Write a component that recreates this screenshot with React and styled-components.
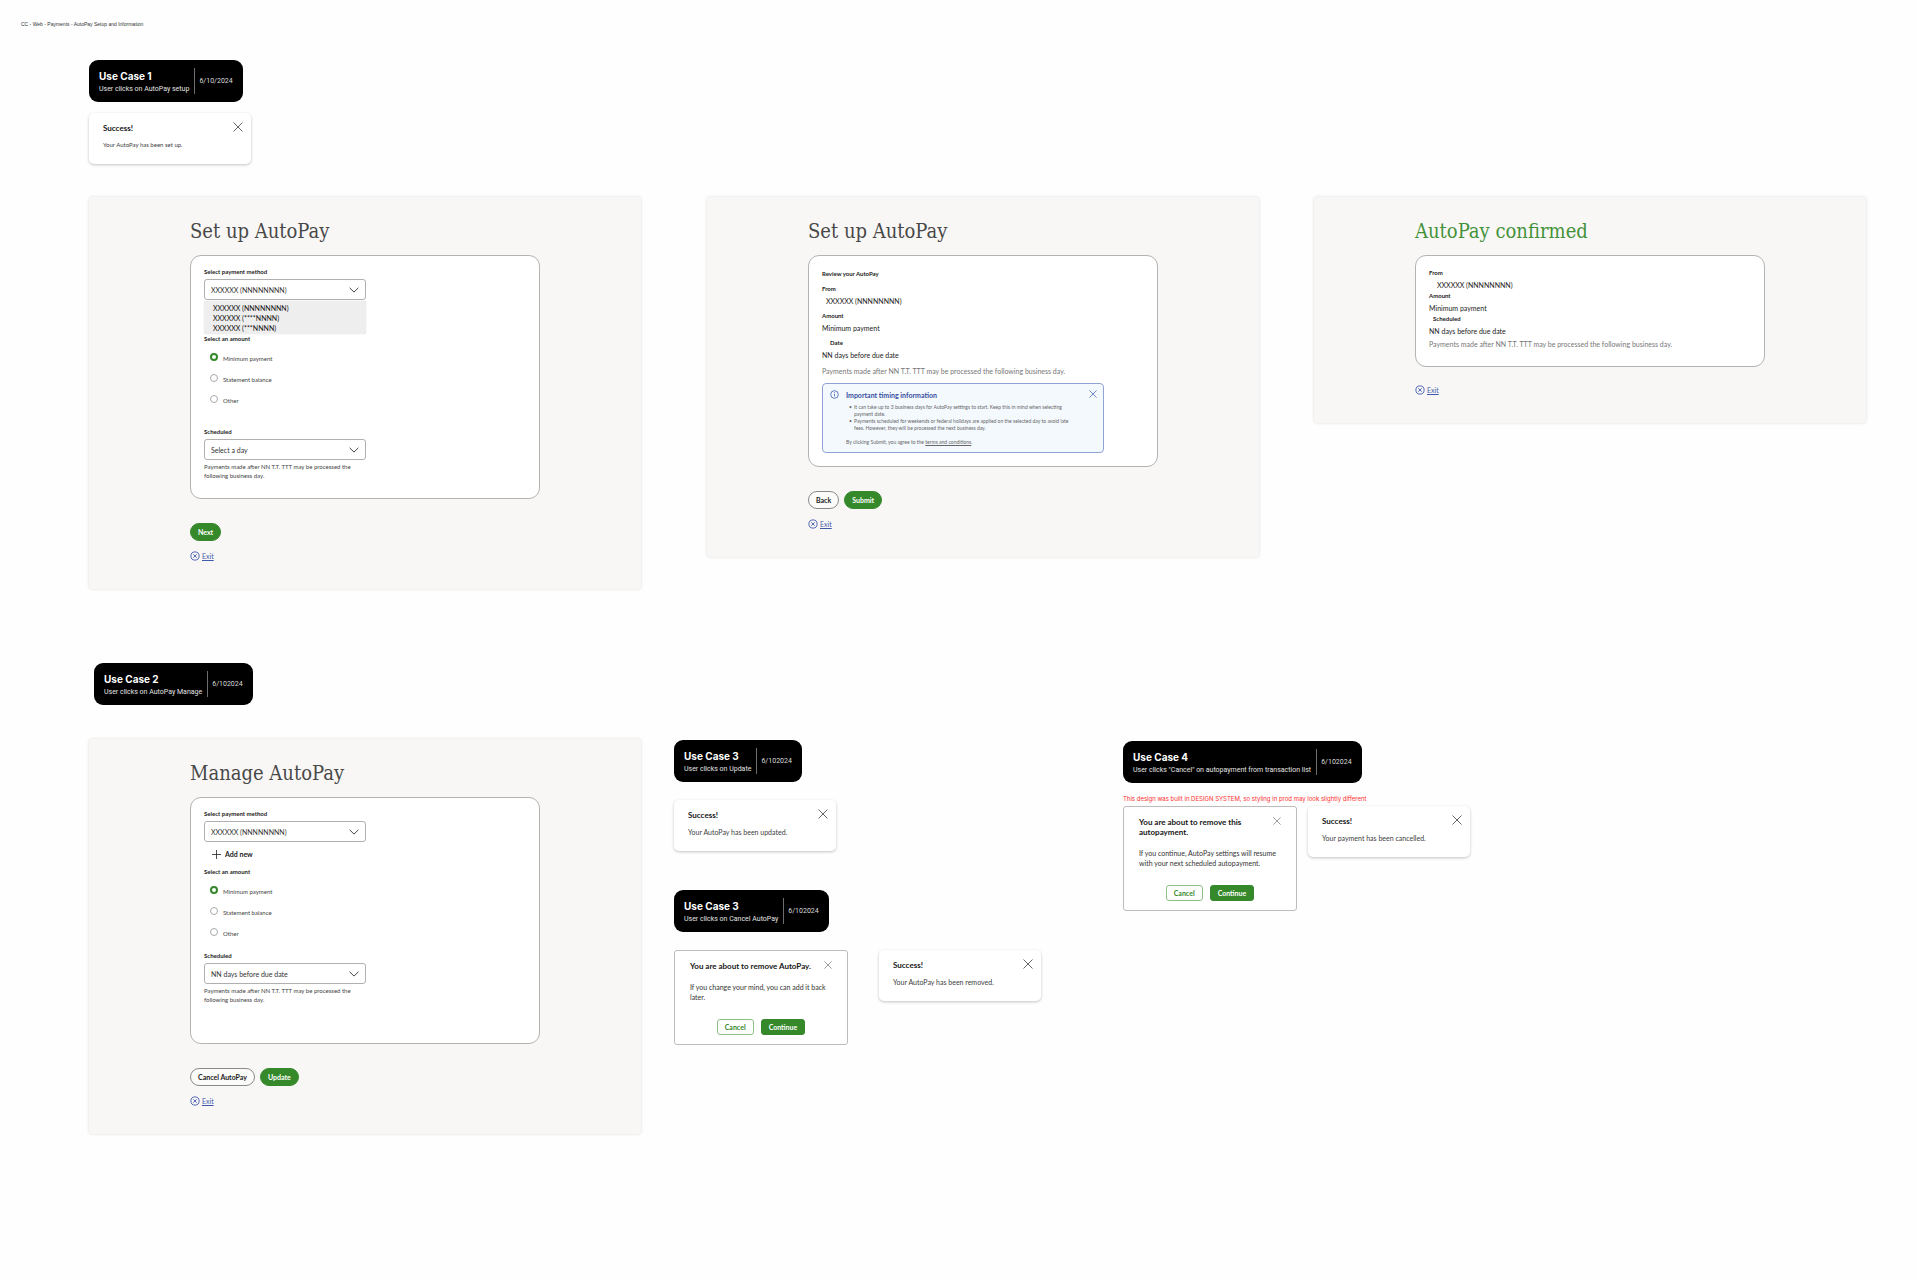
import React, { useId, useState } from "react";
import styled, { createGlobalStyle, css } from "styled-components";

const ink = "#333";
const green = "#35892a";
const blue = "#3f5aab";
const sans = `Lato, "Noto Sans", sans-serif`;
const ui = `Roboto, Inter, sans-serif`;

const GlobalStyle = createGlobalStyle`
  *, *::before, *::after { box-sizing: border-box; }
  body { margin: 0; background: #fefefe; }
  h1, h2, h3, p, ul, dl, dd, dt, fieldset { margin: 0; padding: 0; border: 0; }
  button, input, select { font: inherit; margin: 0; }
`;

const Board = styled.main`
  min-height: 100vh;
  padding: 20px 51px 40px 89px;
  color: ${ink};
  font-family: ${sans};
  font-size: 7px;
  line-height: 10px;
`;

const BoardTitle = styled.p`
  margin: 0 0 32px -68px;
  font-family: "Liberation Sans", sans-serif;
  font-size: 5px;
  line-height: 8px;
`;

const Badge = styled.header`
  display: flex;
  align-items: center;
  width: fit-content;
  height: 42px;
  padding: 0 10px;
  border-radius: 9px;
  background: #000;
  color: #fff;
  font-family: ${ui};
  white-space: nowrap;
`;

const BadgeText = styled.div`
  padding: 2px 5px 0 0;
`;

const BadgeTitle = styled.h2`
  font-family: Inter, sans-serif;
  font-size: 10px;
  line-height: 14px;
  font-weight: 700;
`;

const BadgeSub = styled.p`
  line-height: 12px;
  color: #e4e4e4;
`;

const BadgeDate = styled.time`
  padding-left: 4px;
  border-left: 1px solid #6d6d6d;
  line-height: 26px;
  color: #dcdcdc;
`;

const Opening = styled.div`
  display: grid;
  gap: 11px;
`;

const ToastBox = styled.section`
  display: flex;
  justify-content: space-between;
  align-items: flex-start;
  width: 162px;
  height: 51px;
  padding: 9px 8px 0 14px;
  border-radius: 5px;
  background: #fff;
  box-shadow: 0 1px 3px rgba(0, 0, 0, 0.24);
`;

const ToastTitle = styled.h3`
  margin: 1px 0 7px;
  font-size: 8px;
  line-height: 10px;
  font-weight: 700;
  color: #161616;
`;

const ToastText = styled.p`
  font-size: ${(p) => (p.$small ? 6 : 7)}px;
  color: #404040;
`;

const IconButton = styled.button`
  display: block;
  flex: none;
  padding: 0;
  border: 0;
  background: none;
  color: ${(p) => p.$color || "#555"};
  line-height: 0;
  cursor: pointer;
`;

const Flow = styled.div`
  display: grid;
  grid-template-columns: 552fr 66fr 552fr 55fr 552fr;
  align-items: start;
  margin-top: 33px;

  > :nth-child(2) { grid-column: 3; }
  > :nth-child(3) { grid-column: 5; }
`;

const SecondFlow = styled.div`
  display: grid;
  grid-template-columns: 552fr 1225fr;
  align-items: start;
  margin-top: 34px;
`;

const SecondHead = styled.div`
  margin-top: 74px;
  padding-left: 5px;
`;

const Branches = styled.div`
  display: flex;
  align-items: flex-start;
  gap: 82px;
  padding: 1px 0 0 33px;
`;

const Branch = styled.div`
  display: flex;
  flex-direction: column;
  gap: 18px;
`;

const BranchGroup = styled.div`
  display: grid;
  gap: 39px;
`;

const Side = styled.div`
  padding-top: 1px;
`;

const Pair = styled.div`
  display: flex;
  align-items: flex-start;
  gap: ${(p) => p.$gap}px;
`;

const Warning = styled.p`
  margin: 12px 0 3px;
  font-family: Inter, sans-serif;
  font-size: 6px;
  line-height: 8px;
  color: #ff2d2d;
`;

const Panel = styled.section`
  padding: 20px 101px 28px;
  border-radius: 3px;
  background: #f8f7f5;
  box-shadow: 0 0 3px rgba(0, 0, 0, 0.15);
`;

const PanelTitle = styled.h1`
  margin-bottom: 10px;
  font-family: "Roboto Slab", "DejaVu Serif Condensed", serif;
  font-size: 20px;
  line-height: 28px;
  font-weight: 300;
  white-space: nowrap;
  color: ${(p) => (p.$done ? "#43923a" : "#484848")};
`;

const Card = styled.div`
  padding: 12px 13px ${(p) => p.$bottom}px;
  border: 1px solid #b3b3b3;
  border-radius: 11px;
  background: #fff;
`;

const smallLabel = css`
  display: block;
  font-size: 6px;
  line-height: 8px;
  font-weight: 700;
  color: #222;
`;

const FieldBox = styled.div`
  width: 162px;
  margin-top: ${(p) => p.$top || 0}px;
`;

const FieldLabel = styled.label`
  ${smallLabel}
  margin-bottom: 3px;
`;

const SelectWrap = styled.div`
  display: grid;
  align-items: center;

  > * { grid-area: 1 / 1; }
  > svg {
    justify-self: end;
    margin-right: 7px;
    pointer-events: none;
  }
`;

const SelectBox = styled.select`
  width: 100%;
  height: 21px;
  padding: 0 20px 0 6px;
  border: 1px solid #b0b0b0;
  border-radius: 3px;
  appearance: none;
  background: #fff;
  color: #333;
`;

const OptionList = styled.ul`
  margin: 1px 0;
  padding: 2px 9px 1px;
  border-radius: 3px;
  background: #eeeeee;
  box-shadow: 0 0 1px rgba(0, 0, 0, 0.25);
  list-style: none;
  color: #111;
`;

const Helper = styled.p`
  margin-top: 2px;
  font-size: 6px;
  line-height: 9px;
  color: #444;
`;

const Amounts = styled.fieldset`
  min-width: 0;
`;

const Legend = styled.legend`
  ${smallLabel}
  padding: 0;
  margin-bottom: 3px;
`;

const Choice = styled.label`
  display: flex;
  align-items: center;
  gap: 5px;
  width: fit-content;
  height: 21px;
  padding-left: 6px;
  font-size: 6px;
  color: #444;

  span { padding-top: 4px; }
`;

const Radio = styled.input`
  flex: none;
  width: 8px;
  height: 8px;
  border: 1px solid #a9a9a9;
  border-radius: 50%;
  appearance: none;
  background: #fff;

  &:checked { border: 2px solid ${green}; }
`;

const AddNew = styled.button`
  display: flex;
  align-items: center;
  gap: 4px;
  height: 12px;
  margin: 6px 0 8px 8px;
  padding: 0;
  border: 0;
  background: none;
  color: #222;
  font-weight: 700;
`;

const Actions = styled.div`
  display: flex;
  gap: 5px;
  margin-top: 24px;
`;

const Pill = styled.button`
  height: 18px;
  padding: 0 7px;
  border: 1px solid ${(p) => (p.$primary ? green : "#8a8a8a")};
  border-radius: 9px;
  background: ${(p) => (p.$primary ? green : "#fbfbfa")};
  color: ${(p) => (p.$primary ? "#fff" : "#222")};
  font-weight: 700;
`;

const ExitLink = styled.a`
  display: flex;
  align-items: center;
  gap: 2px;
  width: fit-content;
  height: 10px;
  margin-top: ${(p) => p.$top}px;
  color: ${blue};
  text-decoration: none;

  span { text-decoration: underline; }
`;

const ReviewTitle = styled.h3`
  ${smallLabel}
  margin: 2px 0 7px;
`;

const Summary = styled.dl`
  display: grid;
  gap: ${(p) => p.$gap}px;
  padding-top: ${(p) => p.$top || 0}px;
`;

const Term = styled.dt`
  ${smallLabel}
  margin-bottom: 3px;
  padding-left: ${(p) => p.$indent || 0}px;
`;

const Value = styled.dd`
  padding-left: ${(p) => p.$indent || 0}px;
  color: #222;
`;

const Note = styled.p`
  margin-top: ${(p) => p.$top}px;
  white-space: nowrap;
  color: #777;
`;

const Info = styled.aside`
  display: flex;
  align-items: flex-start;
  gap: 7px;
  width: 282px;
  height: 70px;
  margin-top: 7px;
  padding: 6px 6px 0 7px;
  border: 1px solid #91a3d6;
  border-radius: 4px;
  background: #f4f9fe;
  color: ${blue};
`;

const InfoBody = styled.div`
  flex: 1;
  padding-top: 1px;
  font-size: 5px;
  line-height: 7px;
  color: #666;
`;

const InfoTitle = styled.h3`
  margin-bottom: 5px;
  font-size: 7px;
  line-height: 8px;
  font-weight: 700;
  color: #38509f;
`;

const Bullets = styled.ul`
  margin-bottom: 7px;
  padding-right: 6px;
  list-style: none;

  li {
    display: flex;
  }
  li::before {
    content: "•";
    flex: none;
    width: 8px;
    padding-left: 3px;
  }
`;

const TermsLink = styled.a`
  color: inherit;
`;

const DialogBox = styled.section`
  width: 174px;
  padding: 10px 15px 9px;
  border: 1px solid #bcbcbc;
  border-radius: 3px;
  background: #fff;
`;

const DialogHead = styled.div`
  display: flex;
  justify-content: space-between;
  align-items: flex-start;
  gap: 4px;
  margin-bottom: 11px;
`;

const DialogTitle = styled.h3`
  font-size: 8px;
  line-height: 10px;
  font-weight: 700;
  color: #161616;
`;

const DialogActions = styled.div`
  display: flex;
  justify-content: center;
  gap: 7px;
  margin-top: 17px;
`;

const DialogButton = styled.button`
  height: 16px;
  padding: 0 7px;
  border: 1px solid ${(p) => (p.$primary ? green : "#8fc088")};
  border-radius: 3px;
  background: ${(p) => (p.$primary ? green : "#fff")};
  color: ${(p) => (p.$primary ? "#fff" : green)};
  font-weight: 700;
`;

const Cross = ({ size = 10 }) => (
  <svg width={size} height={size} viewBox="0 0 10 10" fill="none" stroke="currentColor" strokeWidth="0.9">
    <path d="M0.5 0.5 9.5 9.5M9.5 0.5 0.5 9.5" />
  </svg>
);

const Chevron = () => (
  <svg width="10" height="6" viewBox="0 0 10 6" fill="none" stroke="#444" strokeWidth="1">
    <path d="M0.6 0.8 5 5.1 9.4 0.8" />
  </svg>
);

const PlusIcon = () => (
  <svg width="9" height="9" viewBox="0 0 9 9" fill="none" stroke="currentColor" strokeWidth="0.8">
    <path d="M4.5 0v9M0 4.5h9" />
  </svg>
);

const ExitIcon = () => (
  <svg width="10" height="10" viewBox="0 0 10 10" fill="none" stroke="currentColor" strokeWidth="0.9">
    <circle cx="5" cy="5" r="4.1" />
    <path d="M3.3 3.3 6.7 6.7M6.7 3.3 3.3 6.7" />
  </svg>
);

const InfoIcon = () => (
  <svg width="9" height="9" viewBox="0 0 9 9" fill="none" stroke="currentColor" strokeWidth="0.8">
    <circle cx="4.5" cy="4.5" r="3.8" />
    <path d="M4.5 2.2v0.8M4.5 3.8v2.6" />
  </svg>
);

function UseCase({ title, text, date }) {
  return (
    <Badge>
      <BadgeText>
        <BadgeTitle>{title}</BadgeTitle>
        <BadgeSub>{text}</BadgeSub>
      </BadgeText>
      <BadgeDate>{date}</BadgeDate>
    </Badge>
  );
}

function Toast({ small, children }) {
  return (
    <ToastBox>
      <div>
        <ToastTitle>Success!</ToastTitle>
        <ToastText $small={small}>{children}</ToastText>
      </div>
      <IconButton aria-label="Close">
        <Cross />
      </IconButton>
    </ToastBox>
  );
}

function SelectField({ label, value, top, children }) {
  const id = useId();
  return (
    <FieldBox $top={top}>
      <FieldLabel htmlFor={id}>{label}</FieldLabel>
      <SelectWrap>
        <SelectBox id={id}>
          <option>{value}</option>
        </SelectBox>
        <Chevron />
      </SelectWrap>
      {children}
    </FieldBox>
  );
}

function AmountChoices() {
  const name = useId();
  const [picked, setPicked] = useState("Minimum payment");
  return (
    <Amounts>
      <Legend>Select an amount</Legend>
      {["Minimum payment", "Statement balance", "Other"].map((option) => (
        <Choice key={option}>
          <Radio type="radio" name={name} checked={picked === option} onChange={() => setPicked(option)} />
          <span>{option}</span>
        </Choice>
      ))}
    </Amounts>
  );
}

const Exit = ({ top = 10 }) => (
  <ExitLink href="#exit" $top={top}>
    <ExitIcon />
    <span>Exit</span>
  </ExitLink>
);

function Details({ gap, top, rows }) {
  return (
    <Summary $gap={gap} $top={top}>
      {rows.map(([term, value, termIndent, valueIndent]) => (
        <div key={term}>
          <Term $indent={termIndent}>{term}</Term>
          <Value $indent={valueIndent}>{value}</Value>
        </div>
      ))}
    </Summary>
  );
}

function Dialog({ title, children }) {
  return (
    <DialogBox>
      <DialogHead>
        <DialogTitle>{title}</DialogTitle>
        <IconButton aria-label="Close" $color="#777">
          <Cross size={8} />
        </IconButton>
      </DialogHead>
      <p>{children}</p>
      <DialogActions>
        <DialogButton>Cancel</DialogButton>
        <DialogButton $primary>Continue</DialogButton>
      </DialogActions>
    </DialogBox>
  );
}

const account = "XXXXXX (NNNNNNNN)";
const cutoff = "Payments made after NN T.T. TTT may be processed the following business day.";

export default function App() {
  return (
    <Board>
      <GlobalStyle />
      <BoardTitle>CC - Web - Payments - AutoPay Setup and Information</BoardTitle>

      <Opening>
        <UseCase title="Use Case 1" text="User clicks on AutoPay setup" date="6/10/2024" />
        <Toast small>Your AutoPay has been set up.</Toast>
      </Opening>

      <Flow>
        <Panel>
          <PanelTitle>Set up AutoPay</PanelTitle>
          <Card $bottom={18}>
            <SelectField label="Select payment method" value={account}>
              <OptionList>
                <li>{account}</li>
                <li>XXXXXX (****NNNN)</li>
                <li>XXXXXX (***NNNN)</li>
              </OptionList>
            </SelectField>
            <AmountChoices />
            <SelectField label="Scheduled" value="Select a day" top={19}>
              <Helper>{cutoff}</Helper>
            </SelectField>
          </Card>
          <Actions>
            <Pill $primary>Next</Pill>
          </Actions>
          <Exit />
        </Panel>

        <Panel>
          <PanelTitle>Set up AutoPay</PanelTitle>
          <Card $bottom={13}>
            <ReviewTitle>Review your AutoPay</ReviewTitle>
            <Details
              gap={6}
              rows={[
                ["From", account, 0, 4],
                ["Amount", "Minimum payment"],
                ["Date", "NN days before due date", 8],
              ]}
            />
            <Note $top={6}>{cutoff}</Note>
            <Info>
              <InfoIcon />
              <InfoBody>
                <InfoTitle>Important timing information</InfoTitle>
                <Bullets>
                  <li>It can take up to 3 business days for AutoPay settings to start. Keep this in mind when selecting payment date.</li>
                  <li>Payments scheduled for weekends or federal holidays are applied on the selected day to avoid late fees. However, they will be processed the next business day.</li>
                </Bullets>
                <p>
                  By clicking Submit, you agree to the <TermsLink href="#terms">terms and conditions</TermsLink>.
                </p>
              </InfoBody>
              <IconButton aria-label="Dismiss" $color={blue}>
                <Cross size={8} />
              </IconButton>
            </Info>
          </Card>
          <Actions>
            <Pill>Back</Pill>
            <Pill $primary>Submit</Pill>
          </Actions>
          <Exit />
        </Panel>

        <Panel>
          <PanelTitle $done>AutoPay confirmed</PanelTitle>
          <Card $bottom={17}>
            <Details
              gap={2}
              top={1}
              rows={[
                ["From", account, 0, 8],
                ["Amount", "Minimum payment"],
                ["Scheduled", "NN days before due date", 4],
              ]}
            />
            <Note $top={3}>{cutoff}</Note>
          </Card>
          <Exit top={18} />
        </Panel>
      </Flow>

      <SecondHead>
        <UseCase title="Use Case 2" text="User clicks on AutoPay Manage" date="6/102024" />
      </SecondHead>

      <SecondFlow>
        <Panel>
          <PanelTitle>Manage AutoPay</PanelTitle>
          <Card $bottom={39}>
            <SelectField label="Select payment method" value={account} />
            <AddNew>
              <PlusIcon />
              Add new
            </AddNew>
            <AmountChoices />
            <SelectField label="Scheduled" value="NN days before due date" top={10}>
              <Helper>{cutoff}</Helper>
            </SelectField>
          </Card>
          <Actions>
            <Pill>Cancel AutoPay</Pill>
            <Pill $primary>Update</Pill>
          </Actions>
          <Exit />
        </Panel>

        <Branches>
          <BranchGroup>
            <Branch>
              <UseCase title="Use Case 3" text="User clicks on Update" date="6/102024" />
              <Toast>Your AutoPay has been updated.</Toast>
            </Branch>
            <Branch>
              <UseCase title="Use Case 3" text="User clicks on Cancel AutoPay" date="6/102024" />
              <Pair $gap={31}>
                <Dialog title="You are about to remove AutoPay.">
                  If you change your mind, you can add it back later.
                </Dialog>
                <Toast>Your AutoPay has been removed.</Toast>
              </Pair>
            </Branch>
          </BranchGroup>

          <Side>
            <UseCase
              title="Use Case 4"
              text={'User clicks "Cancel" on autopayment from transaction list'}
              date="6/102024"
            />
            <Warning>This design was built in DESIGN SYSTEM, so styling in prod may look slightly different</Warning>
            <Pair $gap={11}>
              <Dialog title="You are about to remove this autopayment.">
                If you continue, AutoPay settings will resume with your next scheduled autopayment.
              </Dialog>
              <Toast>Your payment has been cancelled.</Toast>
            </Pair>
          </Side>
        </Branches>
      </SecondFlow>
    </Board>
  );
}
